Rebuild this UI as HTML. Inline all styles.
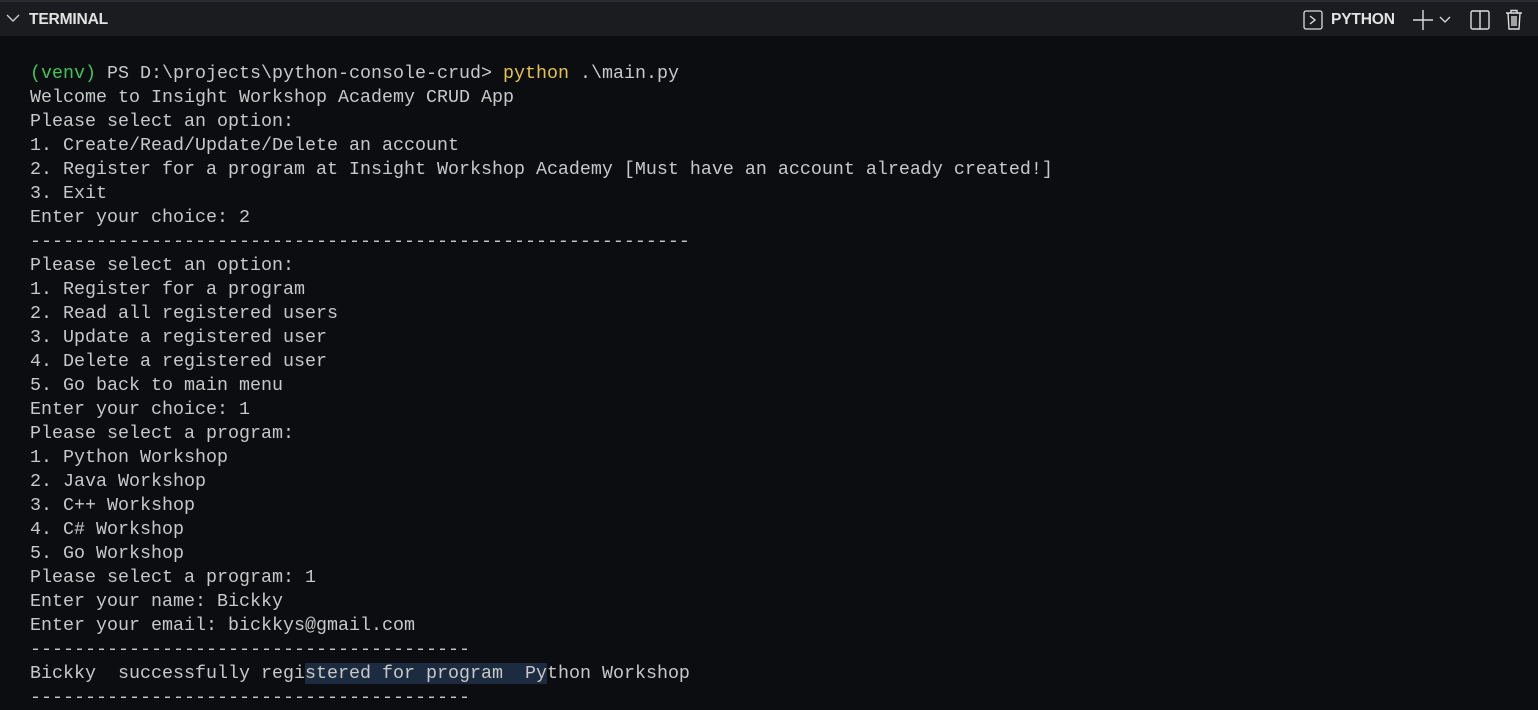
<!DOCTYPE html>
<html><head><meta charset="utf-8"><style>
html,body{margin:0;padding:0;width:1538px;height:706px;overflow:hidden;background:#0c0d11;}
.hdr{position:absolute;left:0;top:0;width:1538px;height:36px;background:#1b1c20;border-top:2px solid #2a2b30;box-sizing:border-box;font-family:"Liberation Sans",sans-serif;color:#e2e2e2;font-weight:bold;font-size:15.6px;letter-spacing:-0.2px;}
.t{position:absolute;left:29px;top:9px;}
.py{position:absolute;left:1331px;top:9px;}
pre{position:absolute;left:30px;top:62px;margin:0;font-family:"Liberation Mono",monospace;font-size:18.33px;line-height:24px;color:#c8c8c8;}
.g{color:#3fc55a}.y{color:#e5c34a}
.sel{background:#1c2b40}
</style></head><body>
<div class="hdr">
<svg style="position:absolute;left:6px;top:11px" width="14" height="10"><path d="M1 2 L7 8 L13 2" stroke="#ccc" stroke-width="1.4" fill="none"/></svg>
<div class="t">TERMINAL</div>
<svg style="position:absolute;left:1303px;top:8px" width="20" height="20"><rect x="1" y="1" width="18" height="18" rx="2" stroke="#ddd" stroke-width="1.3" fill="none"/><path d="M7 6 L12 10 L7 14" stroke="#ddd" stroke-width="1.4" fill="none"/></svg>
<div class="py">PYTHON</div>
<svg style="position:absolute;left:1412px;top:7px" width="22" height="22"><path d="M11 1 V21 M1 11 H21" stroke="#ddd" stroke-width="1.4"/></svg>
<svg style="position:absolute;left:1439px;top:14px" width="12" height="8"><path d="M1 1 L6 6 L11 1" stroke="#ddd" stroke-width="1.3" fill="none"/></svg>
<svg style="position:absolute;left:1470px;top:8px" width="20" height="20"><rect x="1" y="1" width="18" height="18" rx="1.5" stroke="#ddd" stroke-width="1.4" fill="none"/><path d="M10 1 V19" stroke="#ddd" stroke-width="1.4"/></svg>
<svg style="position:absolute;left:1505px;top:7px" width="18" height="21"><path d="M1 4 H17 M6 4 V1.5 H12 V4 M3 4 L4 20 H14 L15 4 M7 7 V17 M9 7 V17 M11 7 V17" stroke="#ddd" stroke-width="1.4" fill="none"/></svg>
</div>
<pre><span class="g">(venv)</span> PS D:\projects\python-console-crud&gt; <span class="y">python</span> .\main.py
Welcome to Insight Workshop Academy CRUD App
Please select an option:
1. Create/Read/Update/Delete an account
2. Register for a program at Insight Workshop Academy [Must have an account already created!]
3. Exit
Enter your choice: 2
------------------------------------------------------------
Please select an option:
1. Register for a program
2. Read all registered users
3. Update a registered user
4. Delete a registered user
5. Go back to main menu
Enter your choice: 1
Please select a program:
1. Python Workshop
2. Java Workshop
3. C++ Workshop
4. C# Workshop
5. Go Workshop
Please select a program: 1
Enter your name: Bickky
Enter your email: bickkys@gmail.com
----------------------------------------
Bickky  successfully regi<span class="sel">stered for program  Py</span>thon Workshop
----------------------------------------</pre>
</body></html>
